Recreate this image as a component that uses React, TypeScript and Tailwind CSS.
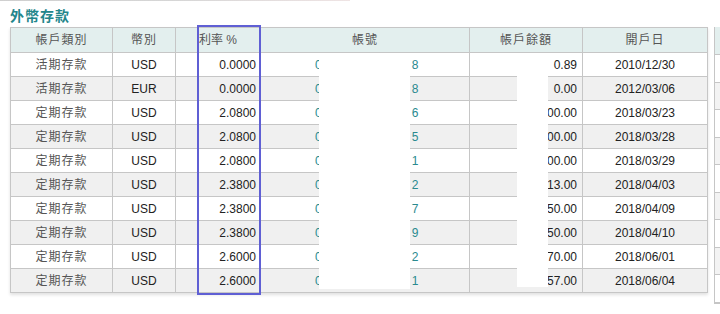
const rows = [
  { type: '活期存款', cur: 'USD', rate: '0.0000', a: '0', z: '8', bal: '0.89', date: '2010/12/30' },
  { type: '活期存款', cur: 'EUR', rate: '0.0000', a: '0', z: '8', bal: '0.00', date: '2012/03/06' },
  { type: '定期存款', cur: 'USD', rate: '2.0800', a: '0', z: '6', bal: '00.00', date: '2018/03/23' },
  { type: '定期存款', cur: 'USD', rate: '2.0800', a: '0', z: '5', bal: '00.00', date: '2018/03/28' },
  { type: '定期存款', cur: 'USD', rate: '2.0800', a: '0', z: '1', bal: '00.00', date: '2018/03/29' },
  { type: '定期存款', cur: 'USD', rate: '2.3800', a: '0', z: '2', bal: '13.00', date: '2018/04/03' },
  { type: '定期存款', cur: 'USD', rate: '2.3800', a: '0', z: '7', bal: '50.00', date: '2018/04/09' },
  { type: '定期存款', cur: 'USD', rate: '2.3800', a: '0', z: '9', bal: '50.00', date: '2018/04/10' },
  { type: '定期存款', cur: 'USD', rate: '2.6000', a: '0', z: '2', bal: '70.00', date: '2018/06/01' },
  { type: '定期存款', cur: 'USD', rate: '2.6000', a: '0', z: '1', bal: '57.00', date: '2018/06/04' },
];

const sideRows = [0, 1, 2, 3, 4, 5, 6, 7, 8];

export default function App() {
  return (
    <div className="relative w-[720px] h-[314px] overflow-hidden bg-white font-['Liberation_Sans','Noto_Sans_CJK_TC',sans-serif]">
      {/* faint edge of the panel above */}
      <div className="h-px w-[350px] bg-gradient-to-r from-[#cfcfcf] via-[#d6d6d6] to-[#efe4e4]" />

      <div className="pl-[10px] pt-[4px]">
        <h2 className="h-[22px] leading-[22px] text-[14px] font-semibold text-[#23868b] tracking-[1px]">
          外幣存款
        </h2>

        <div className="flex items-start">
          <table className="table-fixed border-collapse w-[697px] text-[12px] shadow-[0_2px_3px_rgba(0,0,0,0.12)] border border-[#c2c2c2]">
            <colgroup>
              <col className="w-[102px]" />
              <col className="w-[63px]" />
              <col className="w-[85px]" />
              <col className="w-[209px]" />
              <col className="w-[113px]" />
              <col className="w-[125px]" />
            </colgroup>
            <thead>
              <tr className="bg-[#e3efee] text-[#555] h-[25px]">
                <th className="font-normal border border-[#c6c6c6] tracking-[1px]">帳戶類別</th>
                <th className="font-normal border border-[#c6c6c6] tracking-[1px]">幣別</th>
                <th className="font-normal border border-[#c6c6c6]">利率 %</th>
                <th className="font-normal border border-[#c6c6c6] tracking-[1px]">帳號</th>
                <th className="font-normal border border-[#c6c6c6] tracking-[1px]">帳戶餘額</th>
                <th className="font-normal border border-[#c6c6c6] tracking-[1px]">開戶日</th>
              </tr>
            </thead>
            <tbody>
              {rows.map((r, i) => (
                <tr key={i} className={`h-[24px] ${i % 2 === 1 ? 'bg-[#f0f0f0]' : 'bg-white'}`}>
                  <td className="border border-[#c6c6c6] text-center text-[#555] tracking-[1px]">{r.type}</td>
                  <td className="border border-[#c6c6c6] text-center text-[#222]">{r.cur}</td>
                  <td className="border border-[#c6c6c6] text-right pr-[4px] text-[#222]">{r.rate}</td>
                  <td className="border border-[#c6c6c6] pl-[54px] text-[#2a8a8f]">
                    <span>{r.a}</span>
                    <span className="inline-block w-[90px]" />
                    <span>{r.z}</span>
                  </td>
                  <td className="border border-[#c6c6c6] text-right pr-[5px] text-[#222]">{r.bal}</td>
                  <td className="border border-[#c6c6c6] text-center text-[#222]">{r.date}</td>
                </tr>
              ))}
            </tbody>
          </table>

          {/* next panel, cut off at the window edge */}
          <div className="ml-[6px] w-[40px] shrink-0 border-l border-[#c6c6c6] border-b">
            <div className="h-[28px] bg-[#e3efee] border-b border-[#c6c6c6]" />
            {sideRows.map((i) => (
              <div
                key={i}
                className={`h-[27.5px] border-b border-[#c6c6c6] ${i % 2 === 1 ? 'bg-[#f3f3f3]' : 'bg-white'}`}
              />
            ))}
          </div>
        </div>
      </div>

      {/* redaction boxes */}
      <div className="absolute left-[319px] top-[53px] w-[91px] h-[236px] bg-white" />
      <div className="absolute left-[517px] top-[53px] w-[31px] h-[234px] bg-white" />

      {/* highlight on the rate column */}
      <div className="absolute left-[197px] top-[25px] w-[64px] h-[270px] border-2 border-[#5f5fd4]" />
    </div>
  );
}
